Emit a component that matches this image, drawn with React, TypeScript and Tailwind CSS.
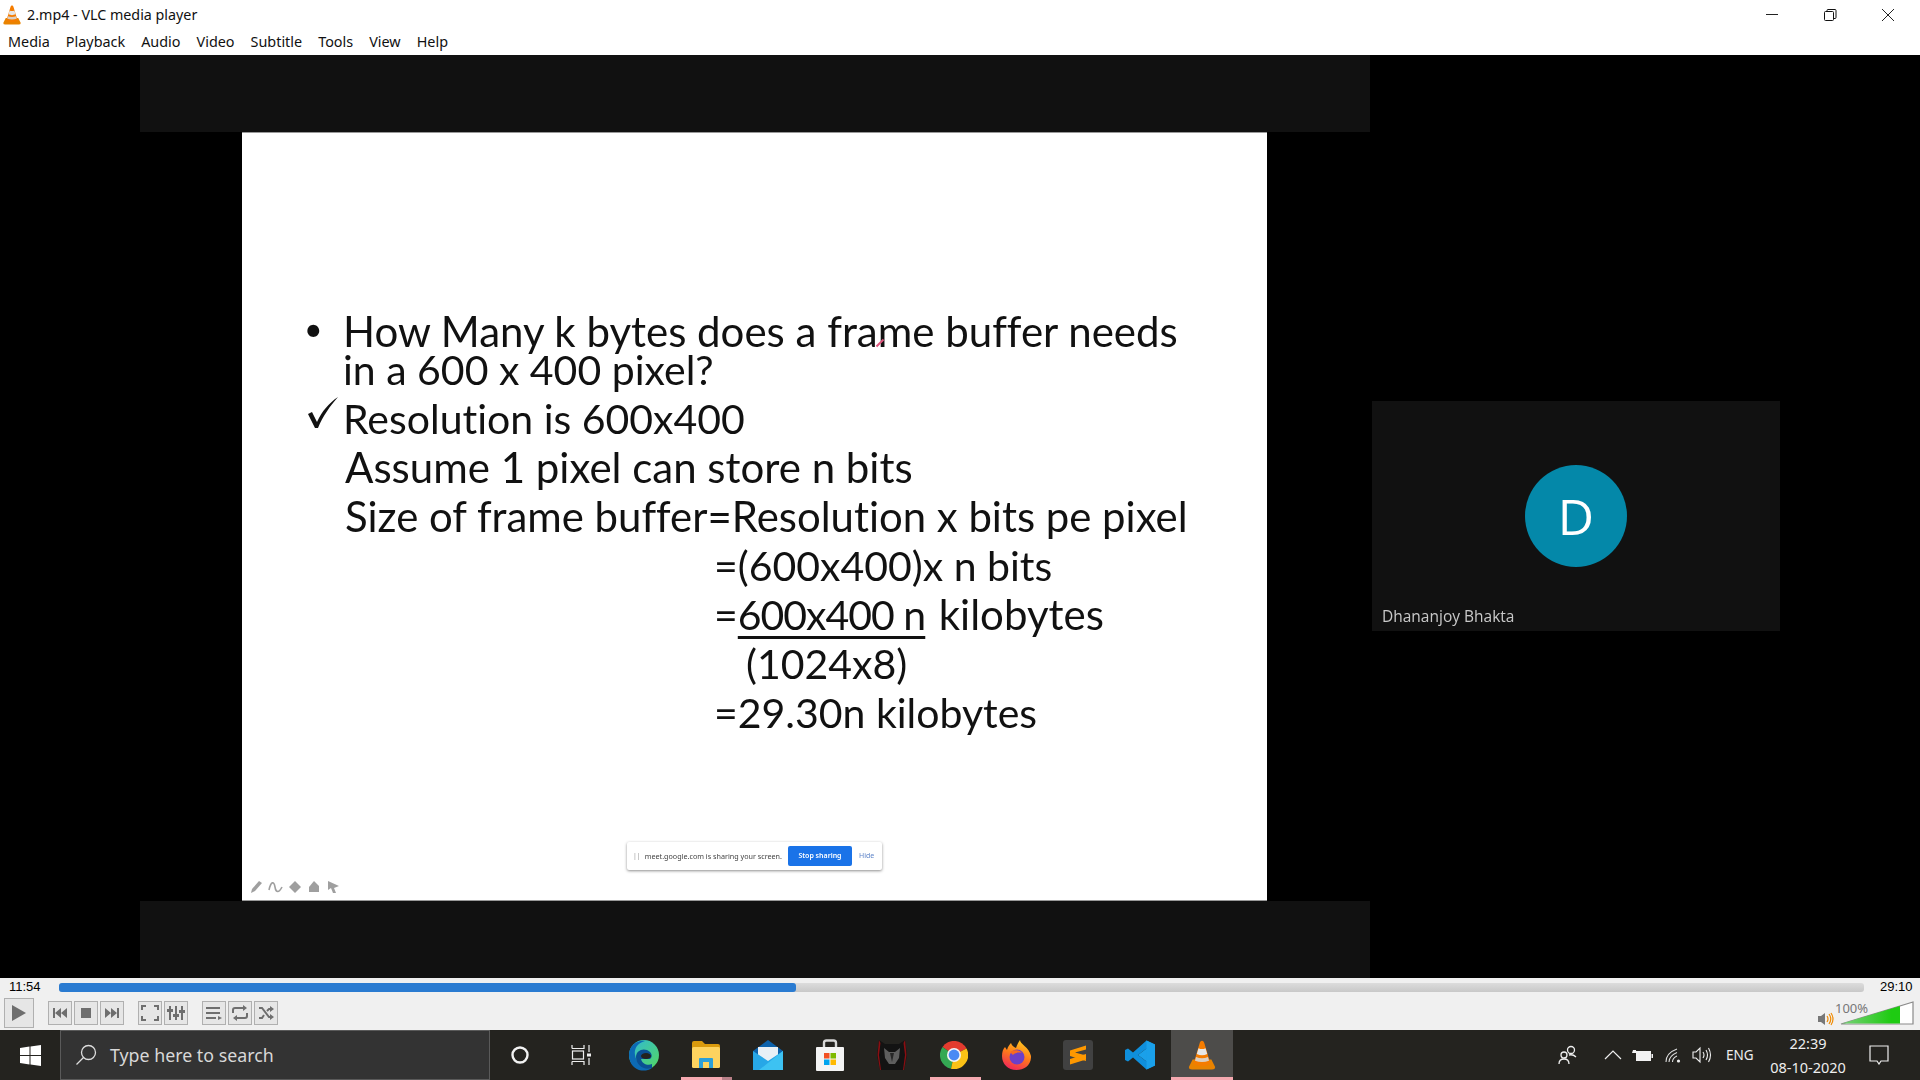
const uiFont = "font-['Noto_Sans','Open_Sans',sans-serif]";

const VlcCone = ({ size = 20 }: { size?: number }) => (
  <svg width={size} height={size} viewBox="0 0 24 24">
    <path d="M1.5 21.5 L4.5 15.5 H19.5 L22.5 21.5 Q22.5 23.5 20 23.5 H4 Q1.5 23.5 1.5 21.5Z" fill="#e98300" />
    <path d="M12 0.5 C13 0.5 13.5 1 14 3 L18.8 19 Q12 22.5 5.2 19 L10 3 C10.5 1 11 0.5 12 0.5Z" fill="#f57c00" />
    <path d="M9.2 6.5 Q12 8 14.8 6.5 L16.2 11.2 Q12 13.2 7.8 11.2Z" fill="#e6e6e6" />
    <path d="M7.2 13.5 Q12 15.5 16.8 13.5 L17.6 16.5 Q12 18.5 6.4 16.5Z" fill="#d8d8d8" opacity="0.9" />
  </svg>
);

const CtlBtn = ({ children }: { children: React.ReactNode }) => (
  <div className="flex h-6 w-6 items-center justify-center border border-[#b0b0b0] bg-[#e6e6e6]">{children}</div>
);

const g = "#6e6e6e";

const TaskIcon = ({ children, active }: { children: React.ReactNode; active?: boolean }) => (
  <div className={`relative flex h-[50px] w-[62px] shrink-0 items-center justify-center ${active ? "bg-[#4d4c4a]" : ""}`}>
    {children}
  </div>
);

export default function App() {
  return (
    <div className={`flex h-[1080px] w-[1920px] flex-col overflow-hidden bg-black ${uiFont}`}>
      {/* title bar */}
      <div className="flex h-[29px] items-center bg-white">
        <div className="ml-[2px] mr-[5px]"><VlcCone size={20} /></div>
        <span className="text-[14.3px] text-[#111]">2.mp4 - VLC media player</span>
        <div className="ml-auto mr-[3px] flex items-center">
          <div className="flex w-[58px] justify-center">
            <svg width="14" height="14" viewBox="0 0 14 14"><path d="M1 6.5H13" stroke="#222" strokeWidth="1" /></svg>
          </div>
          <div className="flex w-[58px] justify-center">
            <svg width="14" height="14" viewBox="0 0 14 14" fill="none" stroke="#111">
              <rect x="1.5" y="3.5" width="9" height="9" rx="1" />
              <path d="M4 3.5V2.5Q4 1.5 5 1.5H12Q13 1.5 13 2.5V9.5Q13 10.5 12 10.5H10.5" />
            </svg>
          </div>
          <div className="flex w-[58px] justify-center">
            <svg width="14" height="14" viewBox="0 0 14 14"><path d="M1 1L13 13M13 1L1 13" stroke="#222" strokeWidth="1" /></svg>
          </div>
        </div>
      </div>
      {/* menu */}
      <div className="flex h-[26px] items-center gap-[16px] bg-white pl-[8px] text-[14.4px] text-[#111]">
        {["Media", "Playback", "Audio", "Video", "Subtitle", "Tools", "View", "Help"].map((m) => (
          <span key={m}>{m}</span>
        ))}
      </div>

      {/* video */}
      <div className="flex h-[923px] bg-black">
        <div className="ml-[140px] flex h-full w-[1230px] flex-col items-start">
          <div className="h-[77px] w-full bg-[#111111]" />
          <div className="ml-[102px] flex h-[769px] w-[1025px] flex-col border-y border-[#999] bg-white">
            <div className="flex flex-col pl-[101px] pt-[179px] font-['Lato',sans-serif] text-[41px] leading-[39px] text-[#111] blur-[0.4px] [font-variant-ligatures:none]">
              <div className="relative text-[42px] leading-[38px]">
                <span className="absolute -left-[39px] top-[-2px] text-[32px]">•</span>
                How Many k bytes does a frame buffer needs
                <div className="absolute left-[532px] top-[30px] h-[2px] w-[10px] -rotate-45 bg-[#e0567e]" />
              </div>
              <div>in a 600 x 400 pixel?</div>
              <div className="relative mt-[5px] leading-[49px]">
                <svg className="absolute -left-[37px] top-[1px]" width="34" height="34" viewBox="0 0 34 34">
                  <path d="M2 19 L6 17 L11 27 C16 16 23 8 32 2 C24 11 17 21 12 33 L9 33 Z" fill="#111" />
                </svg>
                Resolution is 600x400
              </div>
              <div className="ml-[2px] text-[42px] leading-[49px]">Assume 1 pixel can store n bits</div>
              <div className="ml-[2px] text-[41.9px] leading-[49px]">Size of frame buffer=Resolution x bits pe pixel</div>
              <div className="ml-[371px] leading-[49px]">=(600x400)x n bits</div>
              <div className="ml-[371px] leading-[49px]">=<span className="tracking-[-1px] underline decoration-[3px] underline-offset-[6px]">600x400 n</span> <span className="ml-[3px] text-[42px]">kilobytes</span></div>
              <div className="ml-[403px] leading-[49px]">(1024x8)</div>
              <div className="ml-[371px] leading-[49px]">=29.30n kilobytes</div>
            </div>

            {/* meet sharing bar */}
            <div className="ml-[385px] mt-[105px] flex h-[28px] w-[255px] items-center rounded-[2px] bg-white pl-[6px] shadow-[0_1px_3px_rgba(0,0,0,0.45)] blur-[0.3px]">
              <span className="mr-[4px] text-[7px] text-[#999]">||</span>
              <span className="text-[7.2px] whitespace-nowrap text-[#444]">meet.google.com is sharing your screen.</span>
              <div className="ml-[6px] flex h-[20px] w-[64px] items-center justify-center rounded-[2px] bg-[#1a73e8] text-[7px] font-semibold text-white">Stop sharing</div>
              <span className="ml-[7px] text-[7px] text-[#5f85c9]">Hide</span>
            </div>
            {/* pen tools */}
            <div className="mt-[10px] flex items-center gap-[5px] pl-[7px] opacity-80 blur-[0.5px]">
              <svg width="14" height="14" viewBox="0 0 14 14"><path d="M2 13 L3 9 L10 1 L13 3 L6 11Z" fill="#888" /></svg>
              <svg width="15" height="14" viewBox="0 0 15 14" fill="none"><path d="M1 10 C3 1 6 1 7 7 C8 13 11 13 14 7" stroke="#888" strokeWidth="1.6" /></svg>
              <svg width="14" height="14" viewBox="0 0 14 14"><path d="M7 1 L13 7 L7 13 L1 7Z" fill="#888" /></svg>
              <svg width="14" height="14" viewBox="0 0 14 14"><path d="M7 1 L12 6 L12 12 L2 12 L2 7Z" fill="#888" /></svg>
              <svg width="14" height="14" viewBox="0 0 14 14"><path d="M2 1 L13 6 L8 8 L10 13 L7 13 L5 8 L2 10Z" fill="#888" /></svg>
            </div>
          </div>
          <div className="h-[77px] w-full bg-[#111111]" />
        </div>

        {/* participant tile */}
        <div className="ml-[2px] mt-[346px] flex h-[230px] w-[408px] flex-col bg-[#111111]">
          <div className="mx-auto mt-[64px] flex h-[102px] w-[102px] items-center justify-center rounded-full bg-[#0488a9] font-['Open_Sans',sans-serif] text-[50px] text-white">D</div>
          <div className="ml-[10px] mt-[38px] font-['Open_Sans',sans-serif] text-[15.5px] text-[#c9c9c9] blur-[0.3px]">Dhananjoy Bhakta</div>
        </div>
      </div>

      {/* seek row + controls */}
      <div className="flex h-[52px] flex-col bg-[#f0f0f0]">
        <div className="flex h-[18px] items-center">
          <span className="ml-[9px] w-[50px] font-['Liberation_Sans',sans-serif] text-[13px] text-black">11:54</span>
          <div className="h-[9px] w-[1805px] rounded-[3px] bg-gradient-to-b from-[#dcdcdc] to-[#c8c8c8]">
            <div className="h-full w-[737px] rounded-[3px] bg-[#2a7bd1]" />
          </div>
          <span className="ml-[16px] font-['Liberation_Sans',sans-serif] text-[13px] text-black">29:10</span>
        </div>
        <div className="flex h-[34px] items-center pl-[4px]">
          <div className="flex h-[30px] w-[30px] items-center justify-center border border-[#b0b0b0] bg-[#e6e6e6]">
            <svg width="16" height="18" viewBox="0 0 16 18"><path d="M1 1 L15 9 L1 17Z" fill={g} /></svg>
          </div>
          <div className="ml-[14px] flex gap-[2px]">
            <CtlBtn><svg width="16" height="12" viewBox="0 0 16 12"><path d="M1 1H3V11H1ZM9 1V11L3 6ZM15 1V11L9 6Z" fill={g} /></svg></CtlBtn>
            <CtlBtn><svg width="12" height="12" viewBox="0 0 12 12"><rect x="1" y="1" width="10" height="10" fill={g} /></svg></CtlBtn>
            <CtlBtn><svg width="16" height="12" viewBox="0 0 16 12"><path d="M15 1H13V11H15ZM7 1V11L13 6ZM1 1V11L7 6Z" fill={g} /></svg></CtlBtn>
          </div>
          <div className="ml-[14px] flex gap-[2px]">
            <CtlBtn><svg width="18" height="16" viewBox="0 0 18 16" fill="none" stroke={g} strokeWidth="2"><path d="M1 5V1H5M13 1H17V5M17 11V15H13M5 15H1V11" /></svg></CtlBtn>
            <CtlBtn><svg width="18" height="16" viewBox="0 0 18 16" fill={g}><rect x="2" y="1" width="2" height="14" /><rect x="8" y="1" width="2" height="14" /><rect x="14" y="1" width="2" height="14" /><rect x="0" y="4" width="6" height="3" /><rect x="6" y="9" width="6" height="3" /><rect x="12" y="5" width="6" height="3" /></svg></CtlBtn>
          </div>
          <div className="ml-[14px] flex gap-[2px]">
            <CtlBtn><svg width="16" height="14" viewBox="0 0 16 14" fill={g}><rect x="0" y="1" width="14" height="2" /><rect x="0" y="6" width="14" height="2" /><rect x="0" y="11" width="10" height="2" /><path d="M12 10 L16 12 L12 14Z" /></svg></CtlBtn>
            <CtlBtn><svg width="18" height="16" viewBox="0 0 18 16" fill="none" stroke={g} strokeWidth="2"><path d="M2 8V5Q2 3 4 3H14M16 8V11Q16 13 14 13H4" /><path d="M12 0 L16 3 L12 6Z M6 10 L2 13 L6 16Z" fill={g} stroke="none" /></svg></CtlBtn>
            <CtlBtn><svg width="16" height="14" viewBox="0 0 16 14" fill="none" stroke={g} strokeWidth="2"><path d="M1 2H4L11 11H14M1 12H4L6 9M9 5L11 3H14" /><path d="M12 0 L16 3 L12 6Z M12 8 L16 11 L12 14Z" fill={g} stroke="none" /></svg></CtlBtn>
          </div>
          {/* volume */}
          <div className="relative ml-auto mr-[6px] flex items-center">
            <svg width="16" height="14" viewBox="0 0 16 14" className="mr-[6px] mt-[12px]">
              <path d="M0 4H3L7 1V13L3 10H0Z" fill="#777" />
              <path d="M9 4Q11 7 9 10M11 2Q14.5 7 11 12M13 1Q17 7 13 13" fill="none" stroke="#f08a00" strokeWidth="1.2" />
            </svg>
            <div className="relative">
              <svg width="74" height="24" viewBox="0 0 74 24">
                <defs>
                  <linearGradient id="volFill" x1="0" x2="1">
                    <stop offset="0" stopColor="#7ad07a" />
                    <stop offset="0.85" stopColor="#1ecb12" />
                    <stop offset="1" stopColor="#1ecb12" />
                  </linearGradient>
                </defs>
                <path d="M1 23 L73 1 V23Z" fill="#fff" stroke="#8a8a8a" strokeWidth="1.2" />
                <path d="M2 22.5 L60 5 V22.5Z" fill="url(#volFill)" />
              </svg>
              <span className="absolute -left-[5px] top-[-2px] text-[13px] text-[#777]">100%</span>
            </div>
          </div>
        </div>
      </div>

      {/* windows taskbar */}
      <div className="flex h-[50px] items-center bg-[#24231f] text-white">
        <div className="flex w-[60px] justify-center">
          <svg width="21" height="21" viewBox="0 0 21 21" fill="#fff"><path d="M0 3 L9.5 1.6V10H0ZM10.5 1.5 L21 0V10H10.5ZM0 11H9.5V19.4L0 18ZM10.5 11H21V21L10.5 19.5Z" /></svg>
        </div>
        <div className="flex h-[50px] w-[430px] items-center border border-[#5a5a5a] bg-[#333333] pl-[14px] text-[#d8d8d8]">
          <svg width="22" height="22" viewBox="0 0 22 22" fill="none" stroke="#ddd" strokeWidth="1.3"><circle cx="13.5" cy="8.5" r="7" /><path d="M8.5 13.5 L1.5 20.5" /></svg>
          <span className="ml-[13px] text-[17.8px]">Type here to search</span>
        </div>
        <div className="flex w-[59px] justify-center">
          <svg width="18" height="20" viewBox="0 0 18 20" fill="none" stroke="#f2f2f2" strokeWidth="2.4"><circle cx="9" cy="10" r="7.5" /></svg>
        </div>
        <div className="flex w-[64px] justify-center">
          <svg width="20" height="20" viewBox="0 0 20 20" fill="none" stroke="#eee" strokeWidth="1.2"><path d="M1 3.5H13V0M1 3.5V0M1 16.5H13V20M1 16.5V20" /><rect x="1.5" y="6" width="11" height="8" /><path d="M18 0V7M18 13V20" /><rect x="16" y="8.5" width="4" height="3" fill="#eee" stroke="none" /></svg>
        </div>
        <TaskIcon>
          <svg width="32" height="32" viewBox="0 0 32 32">
            <defs>
              <linearGradient id="edgeA" x1="0" y1="0" x2="1" y2="1"><stop offset="0" stopColor="#2fb8d8" /><stop offset="1" stopColor="#55d85f" /></linearGradient>
            </defs>
            <circle cx="16" cy="16" r="15" fill="url(#edgeA)" />
            <path d="M1 16 C1 6 10 1 17 2 C9 4 6 10 7 16 C8 24 16 31 24 29 C20 32 15 32 11 31 C5 29 1 23 1 16Z" fill="#0c6ab5" />
            <path d="M8 18 C8 12 14 9 19 11 C24 13 25 18 22 20 L13 20 C14 25 20 27 24 25 L24 29 C16 32 8 26 8 18Z" fill="#0a4f93" />
            <ellipse cx="18" cy="17" rx="5" ry="3" fill="#24231f" />
          </svg>
        </TaskIcon>
        <TaskIcon>
          <svg width="30" height="30" viewBox="0 0 30 30">
            <path d="M1 3Q1 1 3 1H11L14 4H27Q29 4 29 6V10H1Z" fill="#d99a0d" />
            <rect x="1" y="7" width="28" height="21" rx="1.5" fill="#fdd35f" />
            <path d="M8 28V19Q8 18 9 18H21Q22 18 22 19V28H18V22H12V28Z" fill="#2b9fd8" />
          </svg>
          <div className="absolute bottom-0 left-[6px] h-[3px] w-[41px] bg-[#f5a9b0]" />
          <div className="absolute bottom-0 left-[47px] h-[3px] w-[10px] bg-[#b88088]" />
        </TaskIcon>
        <TaskIcon>
          <svg width="32" height="30" viewBox="0 0 32 30">
            <path d="M1 11 L16 0 L31 11 V14 H1Z" fill="#0c62ac" />
            <path d="M6 7H26V16L16 22L6 16Z" fill="#e8f0f6" />
            <path d="M1 11 L16 21 L31 11 V30 H1Z" fill="#27a7e7" />
            <path d="M31 11 V30 H7 Z" fill="#3dc2f2" />
          </svg>
        </TaskIcon>
        <TaskIcon>
          <svg width="30" height="32" viewBox="0 0 30 32">
            <path d="M9 9V4Q9 1.5 11.5 1.5H18.5Q21 1.5 21 4V9" fill="none" stroke="#d8d8d8" strokeWidth="2.4" />
            <rect x="1" y="8" width="28" height="24" rx="1" fill="#f4f4f4" />
            <rect x="9" y="14" width="5.5" height="5.5" fill="#f25022" />
            <rect x="15.5" y="14" width="5.5" height="5.5" fill="#7fba00" />
            <rect x="9" y="20.5" width="5.5" height="5.5" fill="#00a4ef" />
            <rect x="15.5" y="20.5" width="5.5" height="5.5" fill="#ffb900" />
          </svg>
        </TaskIcon>
        <TaskIcon>
          <svg width="30" height="30" viewBox="0 0 30 30">
            <path d="M2 0 L8 4 H22 L28 0 L30 15 L27 30 H3 L0 15Z" fill="#131313" />
            <path d="M2 0 L0.5 15 L3 30 L4 30 L2 15 L3.5 3Z M28 0 L29.5 15 L27 30 L26 30 L28 15 L26.5 3Z" fill="#8a0f12" />
            <path d="M7 8 L12 12 H18 L23 8 L22 18 L18 24 H12 L8 18Z" fill="#5e5e5e" />
            <path d="M13 13 L15 22 L17 13Z" fill="#262626" />
          </svg>
        </TaskIcon>
        <TaskIcon>
          <svg width="28" height="28" viewBox="0 0 28 28">
            <path d="M14 14 L26.5 7.5 A14 14 0 0 0 2.5 6Z" fill="#e33b2e" />
            <path d="M14 14 L2.5 6 A14 14 0 0 0 11 27.7Z" fill="#34a853" />
            <path d="M14 14 L11 27.7 A14 14 0 0 0 26.5 7.5Z" fill="#fbc116" />
            <circle cx="14" cy="14" r="7" fill="#f5f5f5" />
            <circle cx="14" cy="14" r="5.4" fill="#4a8af4" />
          </svg>
          <div className="absolute bottom-0 left-[7px] h-[3px] w-[51px] bg-[#f5a9b0]" />
        </TaskIcon>
        <TaskIcon>
          <svg width="29" height="30" viewBox="0 0 29 30">
            <defs>
              <linearGradient id="ffA" x1="0.7" y1="0" x2="0.3" y2="1"><stop offset="0" stopColor="#ffcb1f" /><stop offset="0.5" stopColor="#ff7a1a" /><stop offset="1" stopColor="#f0245c" /></linearGradient>
            </defs>
            <path d="M18 0 C18 4 27 7 29 16 C29.5 25 22 30 14.5 30 C6 30 0 24 0 16 C0 12 1 9 3 7 L5 10 C6 6 8 4 9 3 C10 6 12 7 14 8 C15 5 16 3 18 0Z" fill="url(#ffA)" />
            <circle cx="15" cy="17" r="7.5" fill="#6c3fc8" />
            <path d="M8 12 C11 9 18 10 20 13 C16 12 12 13 11 15Z" fill="#f96a1f" />
          </svg>
        </TaskIcon>
        <TaskIcon>
          <svg width="30" height="30" viewBox="0 0 30 30">
            <rect width="30" height="30" rx="3" fill="#414141" />
            <path d="M23 5.5 L7 10.5 V16 L23 21 V15.5 L12 12.5 L23 9.5Z M23 14 L7 19 V24.5 L23 19.5Z" fill="#ff9800" />
          </svg>
        </TaskIcon>
        <TaskIcon>
          <svg width="30" height="30" viewBox="0 0 30 30">
            <path d="M21.5 0.5 L30 4.5 V25.5 L21.5 29.5 L8 17.5 L3 21.5 L0 20 V10 L3 8.5 L8 12.5Z M21.5 8.5 L13 15 L21.5 21.5Z" fill="#0f8fdc" fillRule="evenodd" />
            <path d="M21.5 0.5 L30 4.5 V25.5 L21.5 29.5Z M21.5 8.5 V21.5 L13 15Z" fill="#1aa0ea" fillRule="evenodd" />
          </svg>
        </TaskIcon>
        <TaskIcon active>
          <VlcCone size={30} />
          <div className="absolute bottom-0 left-0 right-0 h-[3px] bg-[#f5a9b0]" />
        </TaskIcon>

        {/* tray */}
        <div className="ml-auto flex items-center">
          <svg width="20" height="20" viewBox="0 0 20 20" fill="none" stroke="#eee" strokeWidth="1.3">
            <circle cx="13" cy="5" r="3.5" /><circle cx="6" cy="10" r="3" /><path d="M1 19Q1 14 6 14Q11 14 11 19M11 10Q15 9 18 12" />
          </svg>
          <svg className="ml-[26px]" width="18" height="10" viewBox="0 0 18 10" fill="none" stroke="#eee" strokeWidth="1.2"><path d="M1 9 L9 1 L17 9" /></svg>
          <svg className="ml-[10px]" width="21" height="14" viewBox="0 0 21 14" fill="#f2f2f2"><rect x="4" y="3" width="15" height="10" /><rect x="19.5" y="6" width="1.5" height="4" /><path d="M0 5H4V2H1Z" /></svg>
          <svg className="ml-[12px]" width="16" height="16" viewBox="0 0 16 16" fill="none" stroke="#ddd" strokeWidth="1.1"><path d="M1 15Q1 6 12 2M4 15Q4 9 12 5.5M7.5 15Q7.5 11 12 9" /><circle cx="13.5" cy="14" r="1.6" fill="#eee" stroke="none" /></svg>
          <svg className="ml-[11px]" width="20" height="18" viewBox="0 0 20 18" fill="none" stroke="#eee" strokeWidth="1.1"><path d="M1 6H4L8 2V16L4 12H1Z" /><path d="M11 6Q13 9 11 12M14 4Q17 9 14 14M16.5 2Q20.5 9 16.5 16" /></svg>
          <span className="ml-[14px] w-[28px] text-[13.5px] text-[#eee]">ENG</span>
          <div className="ml-[16px] flex w-[76px] flex-col items-center text-[14.5px] leading-[24px] text-[#eee]">
            <span>22:39</span>
            <span className="whitespace-nowrap">08-10-2020</span>
          </div>
          <svg className="ml-[23px] mr-[31px]" width="20" height="20" viewBox="0 0 20 20" fill="none" stroke="#eee" strokeWidth="1.2"><path d="M1 1H19V16H12L10 19L8 16H1Z" /></svg>
        </div>
      </div>
    </div>
  );
}
